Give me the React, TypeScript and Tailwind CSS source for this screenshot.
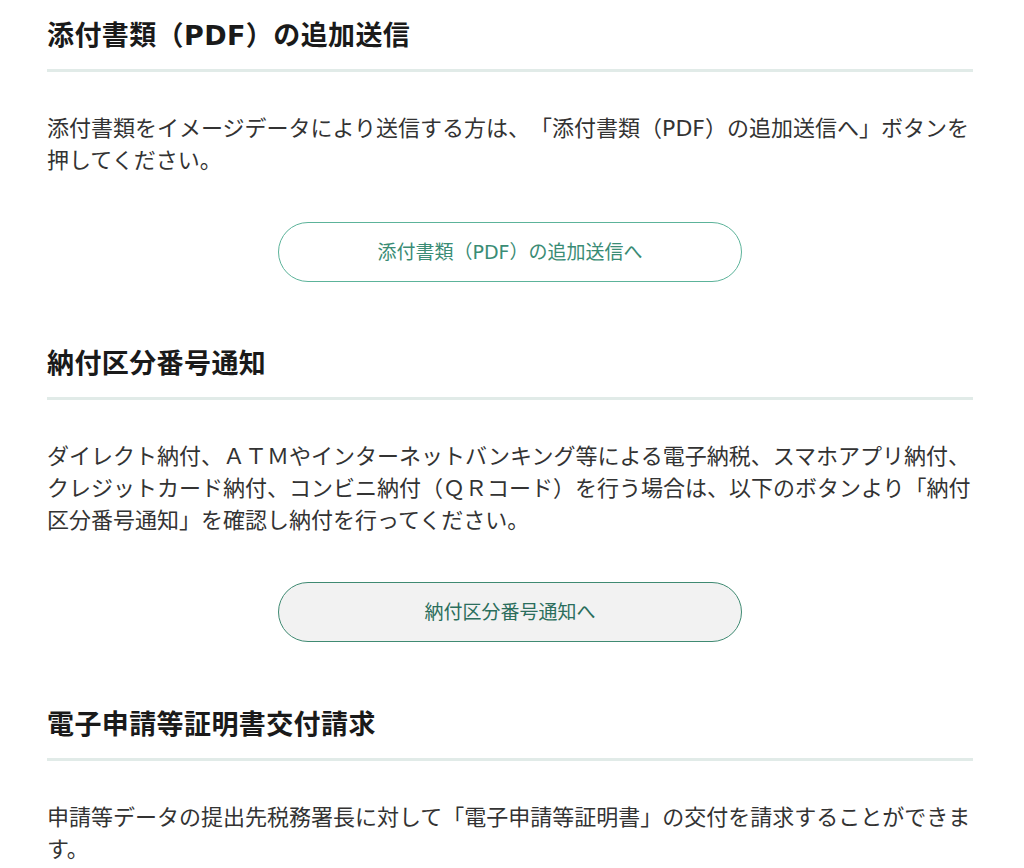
import React from "react";

const font = {
  fontFamily: '"DejaVu Sans", "Noto Sans CJK JP", sans-serif',
};

function Heading({ children }: { children: React.ReactNode }) {
  return (
    <h2 className="text-[27px] font-bold leading-[40px] tracking-[0.4px] text-[#1a1a1a] pb-[13px] border-b-[3px] border-[#e1ebe8] [text-spacing-trim:space-all]">
      {children}
    </h2>
  );
}

function Body({ children }: { children: React.ReactNode }) {
  return (
    <p className="mt-[41px] text-[22px] leading-[32px] text-[#333333] [text-spacing-trim:space-all]">
      {children}
    </p>
  );
}

function Btn({ children, active }: { children: React.ReactNode; active?: boolean }) {
  return (
    <div className="mt-[45px] flex justify-center">
      <a
        href="#"
        className={
          active
            ? "flex h-[60px] w-[464px] items-center justify-center rounded-full border-[1.5px] border-[#3f8a72] bg-[#f2f2f2] text-[19px] text-[#2b6e5c] [text-spacing-trim:space-all]"
            : "flex h-[60px] w-[464px] items-center justify-center rounded-full border-[1.5px] border-[#5cb39a] bg-white text-[19px] text-[#3a8c75] [text-spacing-trim:space-all]"
        }
      >
        {children}
      </a>
    </div>
  );
}

export default function App() {
  return (
    <div className="min-h-[868px] bg-white" style={font}>
      <div className="ml-[47px] w-[926px] pt-[16px]">
        <section>
          <Heading>添付書類（PDF）の追加送信</Heading>
          <Body>
            添付書類をイメージデータにより送信する方は、「添付書類（PDF）の追加送信へ」ボタンを押してください。
          </Body>
          <Btn>添付書類（PDF）の追加送信へ</Btn>
        </section>
        <section className="mt-[62px]">
          <Heading>納付区分番号通知</Heading>
          <Body>
            ダイレクト納付、ＡＴＭやインターネットバンキング等による電子納税、スマホアプリ納付、クレジットカード納付、コンビニ納付（ＱＲコード）を行う場合は、以下のボタンより「納付区分番号通知」を確認し納付を行ってください。
          </Body>
          <Btn active>納付区分番号通知へ</Btn>
        </section>
        <section className="mt-[63px]">
          <Heading>電子申請等証明書交付請求</Heading>
          <Body>
            申請等データの提出先税務署長に対して「電子申請等証明書」の交付を請求することができます。
          </Body>
        </section>
      </div>
    </div>
  );
}
